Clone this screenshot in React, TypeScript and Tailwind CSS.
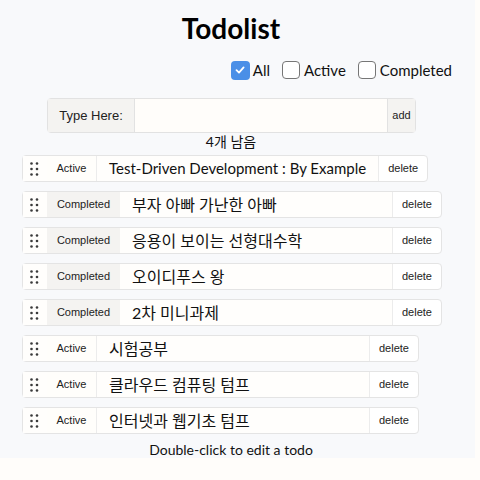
import { useState } from "react";

type Todo = { id: number; text: string; done: boolean };

const initialTodos: Todo[] = [
  { id: 1, text: "Test-Driven Development : By Example", done: false },
  { id: 2, text: "부자 아빠 가난한 아빠", done: true },
  { id: 3, text: "응용이 보이는 선형대수학", done: true },
  { id: 4, text: "오이디푸스 왕", done: true },
  { id: 5, text: "2차 미니과제", done: true },
  { id: 6, text: "시험공부", done: false },
  { id: 7, text: "클라우드 컴퓨팅 텀프", done: false },
  { id: 8, text: "인터넷과 웹기초 텀프", done: false },
];

function Handle() {
  return (
    <svg width="10" height="14" viewBox="0 0 10 14" className="text-[#3a3a3a]">
      <circle cx="1.5" cy="1.5" r="1.3" fill="currentColor" />
      <circle cx="7" cy="1.5" r="1.3" fill="currentColor" />
      <circle cx="1.5" cy="7" r="1.3" fill="currentColor" />
      <circle cx="7" cy="7" r="1.3" fill="currentColor" />
      <circle cx="1.5" cy="12.5" r="1.3" fill="currentColor" />
      <circle cx="7" cy="12.5" r="1.3" fill="currentColor" />
    </svg>
  );
}

function Check({ checked }: { checked: boolean }) {
  return checked ? (
    <span className="flex h-[19px] w-[19px] items-center justify-center rounded-[4px] bg-[#4a8fe7]">
      <svg width="12" height="12" viewBox="0 0 12 12">
        <path d="M2.5 6.2 L5 8.6 L9.6 3.4" stroke="white" strokeWidth="1.8" fill="none" strokeLinecap="round" strokeLinejoin="round" />
      </svg>
    </span>
  ) : (
    <span className="h-[18px] w-[18px] rounded-[4px] border border-[#767676] bg-white" />
  );
}

export default function App() {
  const [todos] = useState(initialTodos);
  const left = todos.filter((t) => !t.done).length;

  return (
    <div className="min-h-[480px] bg-[#fffdfa] font-['Lato','Noto_Sans_CJK_KR',sans-serif] text-[#111]">
      <div className="h-[458px] w-[475px] bg-[#f8f9fb]">
        <div className="w-[462px] pt-[9px] text-center text-[28px] font-bold leading-[38px] text-black">Todolist</div>
        <div className="mt-[13px] flex h-[20px] w-[462px] items-center justify-end pr-[10px] text-[15px] leading-[20px]">
          <Check checked={true} />
          <span className="ml-[3px] mr-[12px]">All</span>
          <Check checked={false} />
          <span className="ml-[4px] mr-[12px]">Active</span>
          <Check checked={false} />
          <span className="ml-[4px]">Completed</span>
        </div>
        <div className="ml-[47px] mt-[18px] flex h-[35px] w-[369px] rounded-[4px] border border-[#e2e2e2] bg-[#fffdfa]">
          <span className="flex w-[87px] items-center justify-center border-r border-[#e2e2e2] bg-[#f4f3f1] font-['Liberation_Sans',sans-serif] text-[13px] text-[#222]">
            Type Here:
          </span>
          <span className="flex-1" />
          <span className="flex w-[28px] items-center justify-center border-l border-[#e2e2e2] bg-[#f4f3f1] font-['Liberation_Sans',sans-serif] text-[11px] text-[#222]">
            add
          </span>
        </div>
        <div className="w-[462px] text-center text-[14px] leading-[18px]">{left}개 남음</div>
        <ul className="ml-[22px] mt-[4px] flex flex-col items-start gap-[9px]">
          {todos.map((t) => (
            <li key={t.id} className="flex h-[27px] items-stretch rounded-[4px] border border-[#e4e4e4] bg-white">
              <span className="flex w-[24px] items-center justify-center bg-[#fffefc]">
                <Handle />
              </span>
              <span
                className={
                  t.done
                    ? "flex w-[73px] items-center justify-center bg-[#f4f3f1] font-['Liberation_Sans',sans-serif] text-[11px] text-[#222]"
                    : "flex w-[50px] items-center justify-center border-r border-[#ececec] bg-[#fffefb] font-['Liberation_Sans',sans-serif] text-[11px] text-[#222]"
                }
              >
                {t.done ? "Completed" : "Active"}
              </span>
              <span
                className={
                  /[가-힣]/.test(t.text)
                    ? "flex min-w-[272px] items-center whitespace-nowrap bg-[#fffefc] px-[12px] text-[16px]"
                    : "flex min-w-[272px] items-center whitespace-nowrap bg-[#fffefc] px-[12px] text-[15px]"
                }
              >
                {t.text}
              </span>
              <span className="flex w-[49px] items-center justify-center border-l border-[#ececec] font-['Liberation_Sans',sans-serif] text-[11px] text-[#222]">
                delete
              </span>
            </li>
          ))}
        </ul>
        <div className="mt-[7px] w-[462px] text-center text-[14px] leading-[18px]">Double-click to edit a todo</div>
      </div>
    </div>
  );
}
